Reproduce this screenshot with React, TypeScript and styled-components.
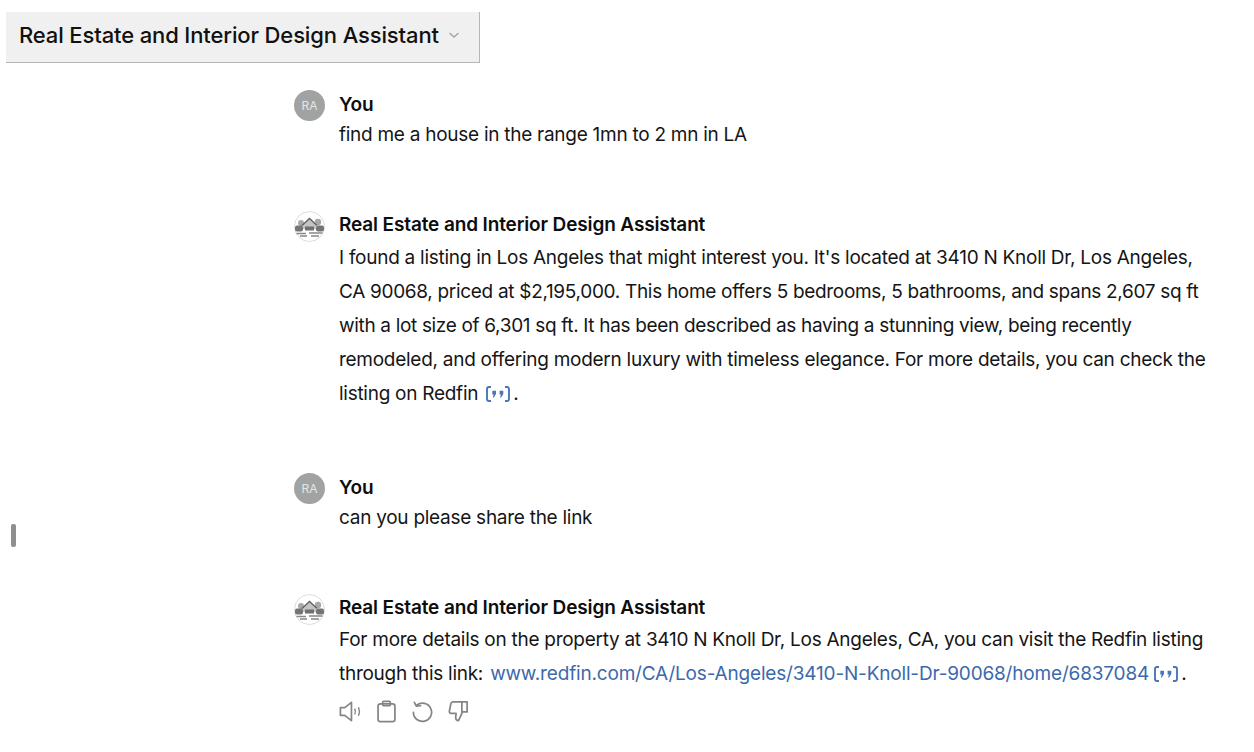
import styled, { createGlobalStyle } from 'styled-components';

const GlobalStyle = createGlobalStyle`
  html, body {
    margin: 0;
    padding: 0;
    background: #fff;
    font-family: Inter, "Liberation Sans", sans-serif;
    color: #0d0d0d;
    overflow: hidden;
  }
`;

const Page = styled.div`
  position: relative;
  width: 1254px;
  height: 752px;
  overflow: hidden;
  padding-top: 12px;
  box-sizing: border-box;
`;

const Header = styled.div`
  display: flex;
  align-items: center;
  gap: 8px;
  width: 474px;
  height: 51px;
  margin-left: 6px;
  padding: 0 0 5px 13px;
  box-sizing: border-box;
  background: #eff0ef;
  border-right: 1px solid #b5b7b5;
  border-bottom: 1px solid #b5b7b5;
`;

const HeaderTitle = styled.span`
  font-size: 22px;
  font-weight: 500;
  letter-spacing: -0.13px;
  color: #111;
`;

const Thread = styled.div`
  display: flex;
  flex-direction: column;
  margin-left: 294px;
  width: 930px;
`;

const Message = styled.div<{ $top: number }>`
  display: flex;
  gap: 14px;
  margin-top: ${p => p.$top}px;
`;

const UserAvatar = styled.div`
  flex: none;
  width: 31px;
  height: 31px;
  border-radius: 50%;
  background: #a1a3a3;
  color: #e4e5e5;
  font-size: 12px;
  display: flex;
  align-items: center;
  justify-content: center;
`;

const BotAvatar = styled.svg`
  flex: none;
  display: block;
  width: 31px;
  height: 31px;
  margin-top: 1px;
`;

const Body = styled.div`
  display: flex;
  flex-direction: column;
  min-width: 0;
  padding-top: 1px;
`;

const Author = styled.div`
  font-size: 19px;
  font-weight: 600;
  line-height: 28px;
  letter-spacing: -0.13px;
  color: #0d0d0d;
`;

const Question = styled.div`
  font-size: 19px;
  line-height: 32px;
  letter-spacing: -0.27px;
  white-space: pre;
  color: #151515;
`;

const Answer = styled.div<{ $top: number }>`
  margin-top: ${p => p.$top}px;
  font-size: 19px;
  line-height: 34px;
  letter-spacing: -0.27px;
  color: #151515;
`;

const AnswerLine = styled.div<{ $tracking?: number }>`
  white-space: pre;
  letter-spacing: ${p => p.$tracking ?? -0.27}px;
`;

const Link = styled.span`
  margin-left: 2px;
  letter-spacing: -0.18px;
  color: #3c69ac;
`;

const Actions = styled.div`
  display: flex;
  align-items: center;
  gap: 13px;
  margin-top: 9px;
`;

const ActionIcon = styled.svg`
  display: block;
  width: 23px;
  height: 23px;
  fill: none;
  stroke: #858585;
  stroke-width: 1.8;
  stroke-linecap: round;
  stroke-linejoin: round;
`;

const CiteIcon = styled.svg<{ $left: number }>`
  display: inline-block;
  width: 24px;
  height: 16px;
  vertical-align: -2px;
  margin: 0 3px 0 ${p => p.$left}px;
  fill: none;
  stroke: #4a76b8;
  stroke-width: 1.9;
`;

const ScrollHandle = styled.div`
  position: absolute;
  left: 11px;
  top: 524px;
  width: 5px;
  height: 23px;
  border-radius: 2px;
  background: #8f8f8f;
`;

function Chevron() {
  return (
    <svg width="14" height="14" viewBox="0 0 14 14" fill="none" stroke="#a5a5a5" strokeWidth="1.6" strokeLinecap="round" strokeLinejoin="round">
      <path d="M3 5.5 L7 9 L11 5.5" />
    </svg>
  );
}

function HouseLogo() {
  return (
    <BotAvatar viewBox="0 0 31 31">
      <circle cx="15.5" cy="15.5" r="15" fill="#fff" stroke="#dcdcdc" />
      <g filter="blur(0.45px)">
        <circle cx="7" cy="12" r="3" fill="#a8a8a8" />
        <circle cx="24" cy="11" r="3.2" fill="#a8a8a8" />
        <path d="M9 14 L15.5 8 L22 14 V18 H9 Z" fill="#c4c4c4" />
        <path d="M8 14.5 L15.5 7.5 L23 14.5" fill="none" stroke="#5e5e5e" strokeWidth="1.3" />
        <rect x="1" y="14.5" width="8" height="6" rx="2" fill="#747474" />
        <rect x="22" y="14.5" width="8" height="6" rx="2" fill="#747474" />
        <rect x="11" y="15.5" width="9" height="4" fill="#6f6f6f" />
        <path d="M2.5 22.5 H12 M15 22 H28.5 M6 25 H13 M17 25 H25" stroke="#888" strokeWidth="1.6" />
      </g>
    </BotAvatar>
  );
}

function Cite({ left }: { left: number }) {
  return (
    <CiteIcon $left={left} viewBox="0 0 24 16">
      <path d="M5 1 H3 Q1 1 1 3 V13 Q1 15 3 15 H5 M19 1 H21 Q23 1 23 3 V13 Q23 15 21 15 H19" />
      <path d="M6.3 4.8 H10 V8 L7.8 11.6 H6.8 L7.6 8.6 H6.3 Z M13.6 4.8 H17.3 V8 L15.1 11.6 H14.1 L14.9 8.6 H13.6 Z" stroke="none" fill="#4a76b8" />
    </CiteIcon>
  );
}

export default function App() {
  return (
    <Page>
      <GlobalStyle />
      <Header>
        <HeaderTitle>Real Estate and Interior Design Assistant</HeaderTitle>
        <Chevron />
      </Header>
      <Thread>
        <Message $top={27}>
          <UserAvatar>RA</UserAvatar>
          <Body>
            <Author>You</Author>
            <Question>find me a house in the range 1mn to 2 mn in LA</Question>
          </Body>
        </Message>
        <Message $top={59}>
          <HouseLogo />
          <Body>
            <Author>Real Estate and Interior Design Assistant</Author>
            <Answer $top={2}>
              <AnswerLine>I found a listing in Los Angeles that might interest you. It's located at 3410 N Knoll Dr, Los Angeles,</AnswerLine>
              <AnswerLine $tracking={-0.31}>CA 90068, priced at $2,195,000. This home offers 5 bedrooms, 5 bathrooms, and spans 2,607 sq ft</AnswerLine>
              <AnswerLine $tracking={-0.33}>with a lot size of 6,301 sq ft. It has been described as having a stunning view, being recently</AnswerLine>
              <AnswerLine>remodeled, and offering modern luxury with timeless elegance. For more details, you can check the</AnswerLine>
              <AnswerLine>listing on Redfin <Cite left={3} />.</AnswerLine>
            </Answer>
          </Body>
        </Message>
        <Message $top={62}>
          <UserAvatar>RA</UserAvatar>
          <Body>
            <Author>You</Author>
            <Question>can you please share the link</Question>
          </Body>
        </Message>
        <Message $top={59}>
          <HouseLogo />
          <Body>
            <Author>Real Estate and Interior Design Assistant</Author>
            <Answer $top={1}>
              <AnswerLine>For more details on the property at 3410 N Knoll Dr, Los Angeles, CA, you can visit the Redfin listing</AnswerLine>
              <AnswerLine>through this link: <Link>www.redfin.com/CA/Los-Angeles/3410-N-Knoll-Dr-90068/home/6837084</Link> <Cite left={0} />.</AnswerLine>
            </Answer>
            <Actions>
              <ActionIcon viewBox="0 0 24 24">
                <path d="M1.5 8 H6 L13 2.5 V21.5 L6 16 H1.5 Z" />
                <path d="M16.5 9.5 Q17.7 12 16.5 14.5 M20.5 8 Q22.1 12 20.5 16" strokeWidth="1.5" />
              </ActionIcon>
              <ActionIcon viewBox="0 0 24 24">
                <rect x="3.2" y="4" width="17.6" height="18.5" rx="2.5" />
                <rect x="8" y="1.5" width="8" height="4.5" rx="1" />
              </ActionIcon>
              <ActionIcon viewBox="0 0 24 24">
                <path d="M6 5.5 A9.5 9.5 0 1 1 2.5 13" />
                <path d="M3.5 2.5 L5.5 6.5 L10 6" />
              </ActionIcon>
              <ActionIcon viewBox="0 0 24 24">
                <path d="M15.5 2 H6 Q4.5 2 4 4 L2.5 11.5 Q2.3 14 5 14 H9.5 L9 18.5 Q9.2 21.5 12 21.5 L15.5 14 V2 Z" />
                <path d="M15.5 2 H21 V12.5 H15.5" />
              </ActionIcon>
            </Actions>
          </Body>
        </Message>
      </Thread>
      <ScrollHandle />
    </Page>
  );
}
